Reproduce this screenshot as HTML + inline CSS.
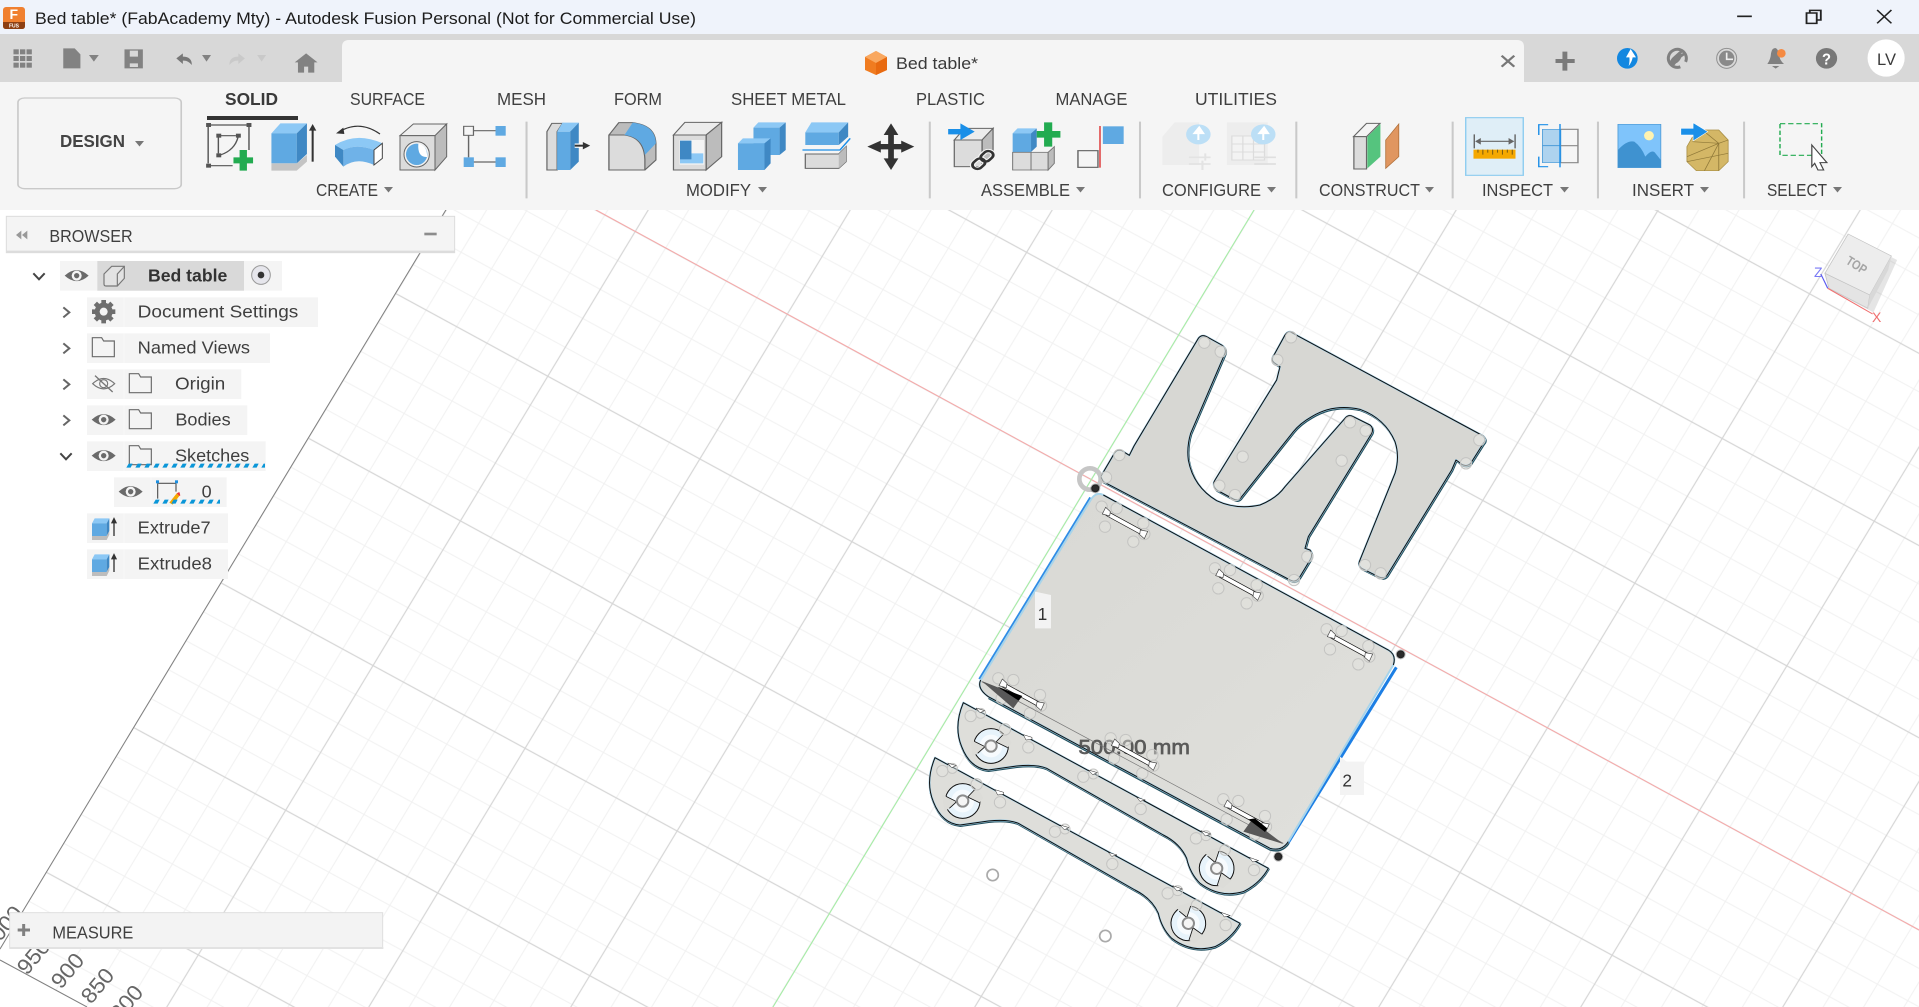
<!DOCTYPE html>
<html><head><meta charset="utf-8"><title>Bed table</title>
<style>
html,body{margin:0;padding:0;width:1919px;height:1007px;overflow:hidden;background:#fff}
svg{display:block}
text{font-family:"Liberation Sans",sans-serif;fill:#3f3f3f}
.br{font-size:52px}
</style></head><body>
<svg width="1919" height="1007" viewBox="0 0 1919 1007" xmlns="http://www.w3.org/2000/svg">
<defs>
<pattern id="grid" patternUnits="userSpaceOnUse" width="100" height="100" patternTransform="matrix(1.5204,.8271,-.8738,1.4467,1091.3,479.7)">
<path d="M20 0V100M40 0V100M60 0V100M80 0V100M0 20H100M0 40H100M0 60H100M0 80H100" stroke="#f1f1f1" stroke-width=".6" fill="none"/>
<path d="M0 0V100M100 0V100M0 0H100M0 100H100" stroke="#d6d6d6" stroke-width=".7" fill="none"/>
</pattern>
<pattern id="sq" patternUnits="userSpaceOnUse" width="27" height="18">
<path d="M1,17 L8,5 H20 L14,17Z" fill="#0a96d8"/>
</pattern>
<linearGradient id="pl" x1="0" y1="0" x2="1" y2="1"><stop offset="0" stop-color="#d8d8d4"/><stop offset="1" stop-color="#e0e0dc"/></linearGradient>
<g id="slot">
<g fill="rgba(228,228,224,.45)" stroke="#c4c4c2" stroke-width="3">
<circle cx="-70" cy="-50" r="17"/><circle cx="-25" cy="-45" r="17"/><circle cx="-60" cy="10" r="17"/><circle cx="55" cy="0" r="17"/><circle cx="25" cy="55" r="17"/><circle cx="58" cy="32" r="17"/></g>
<line x1="-55" y1="-30" x2="55" y2="30" stroke="#111" stroke-width="15"/>
<line x1="-55" y1="-30" x2="55" y2="30" stroke="#fff" stroke-width="11"/>
<path d="M-68,-28 L-58,-48 L-44,-35 L-46,-22Z M68,24 L58,46 L44,34 L46,20Z" fill="#fff" stroke="#444" stroke-width="2"/>
</g>
<g id="cut">
<circle r="52" fill="#e7f3fb" stroke="#111" stroke-width="3"/>
<circle r="34" fill="#f7fbfe"/>
<path d="M-62,-20 L-50,-14 L-18,2 L-40,22 L-55,30Z M42,-40 L15,-12 L50,5 L62,-10Z" fill="#dcdcd8"/>
<path d="M-50,-14 L-18,2 L-40,22 M38,-36 L15,-12 L50,5" fill="none" stroke="#111" stroke-width="2.5"/>
<circle r="17" fill="#f5f5f5" stroke="#8c8c8c" stroke-width="6"/>
</g>
<path id="rp" d="M190,188 L1105,685 Q1080,730 1030,755 Q960,775 900,730 Q870,700 860,655 Q840,610 790,585 L440,385 Q410,372 350,378 Q300,385 265,390 Q210,385 185,320 Q160,260 190,188Z"/>
<g id="rail">
<use href="#rp" transform="translate(1,3)" fill="none" stroke="#23505f" stroke-width="6" stroke-linejoin="round"/>
<use href="#rp" fill="#dededa" stroke="#a8d4ea" stroke-width="6" stroke-linejoin="round"/>
<use href="#rp" fill="none" stroke="#0e0e0e" stroke-width="3" stroke-linejoin="round"/>
<use href="#cut" transform="translate(273,318)"/>
<use href="#cut" transform="translate(950,685) rotate(82)"/>
<g fill="rgba(228,228,224,.45)" stroke="#c4c4c2" stroke-width="3">
<circle cx="212" cy="228" r="17"/><circle cx="242" cy="220" r="15"/><circle cx="315" cy="268" r="17"/><circle cx="385" cy="322" r="17"/><circle cx="550" cy="410" r="17"/><circle cx="580" cy="402" r="15"/><circle cx="722" cy="507" r="17"/><circle cx="888" cy="595" r="17"/><circle cx="918" cy="587" r="15"/><circle cx="1062" cy="690" r="17"/><circle cx="975" cy="630" r="16"/></g>
<g fill="#fff" stroke="#222" stroke-width="1.5">
<path d="M228,204 L240,218 L254,212Z"/><path d="M370,284 L378,300 L396,298 L396,292Z"/><path d="M565,390 L578,404 L592,398Z"/><path d="M710,472 L720,484 L736,480Z"/><path d="M903,572 L916,588 L932,582Z"/><path d="M1048,652 L1058,666 L1076,662Z"/></g>
</g>
<g id="eye"><path d="M-36,0 Q0,-33 36,0 Q0,33 -36,0Z" fill="#6a6a6a"/><circle r="15" fill="#f4f4f4"/><circle r="8" fill="#6a6a6a"/></g>
<path id="fold" d="M0,57 V0 H28 L34,10 H66 V57Z" fill="#f4f4f4" stroke="#6a6a6a" stroke-width="3.5"/>
<g id="ex">
<path d="M0,22 L8,7 H52 L44,22Z" fill="#8cc8f5"/><path d="M0,22 H44 V60 H0Z" fill="#5fa9e2"/><path d="M44,22 L52,7 V45 L44,60Z" fill="#3f88c4"/>
<path d="M0,60 H44 L52,45 V56 L44,72 H0Z" fill="#bdbdbd"/><path d="M66,60 V12 M60,20 L66,8 L72,20Z" stroke="#333" stroke-width="4" fill="#333"/>
</g>
<path id="car" d="M0,0 H9 L4.5,5.5Z" fill="#777"/>
<path id="sa" d="M122,500 L163,430 Q175,412 195,428 L208,436 L222,408 L415,85 Q425,72 440,80 L485,105 Q500,115 495,130 L392,370 Q380,410 385,450 Q400,530 470,572 Q530,600 600,585 Q650,565 675,530 L855,325 Q865,312 880,320 L930,345 Q942,355 935,370 L745,680 L735,715 L750,720 Q760,735 750,750 L720,800 Q708,820 690,810 L130,515Z"/>
<path id="sb" d="M690,65 L1270,378 Q1280,390 1270,400 L1232,460 Q1215,475 1195,455 L1188,450 L1175,480 L985,790 Q975,810 955,800 L905,775 Q892,765 900,750 L1005,490 Q1020,440 1005,395 Q975,325 900,298 Q820,280 755,320 Q720,340 700,365 L545,560 Q535,575 520,567 L470,540 Q455,525 465,510 L650,210 L660,170 L645,160 Q630,150 642,135 L675,75 Q685,60 700,68Z"/>
</defs>

<!-- canvas -->
<rect width="1919" height="1007" fill="#fff"/>
<polygon points="0,949 476,160 1919,160 1919,1007 87,1007 0,960" fill="url(#grid)"/>
<path d="M0,949 L476,160 M0,960 L87,1007" stroke="#808080" stroke-width="1" fill="none"/>
<line x1="596" y1="210" x2="1919" y2="930" stroke="#f8a8a8" stroke-width="1"/>
<line x1="1254" y1="210" x2="773" y2="1007" stroke="#a4f0a4" stroke-width="1"/>
<!-- scale labels -->
<g>
<text transform="translate(-8,952) rotate(-50)" font-size="22" style="fill:#666" textLength="50" lengthAdjust="spacingAndGlyphs">1000</text>
<text transform="translate(27,976) rotate(-50)" font-size="22" style="fill:#666" textLength="38" lengthAdjust="spacingAndGlyphs">950</text>
<text transform="translate(61,990) rotate(-50)" font-size="22" style="fill:#666" textLength="38" lengthAdjust="spacingAndGlyphs">900</text>
<text transform="translate(91,1005) rotate(-50)" font-size="22" style="fill:#666" textLength="38" lengthAdjust="spacingAndGlyphs">850</text>
<text transform="translate(120,1022) rotate(-50)" font-size="22" style="fill:#666" textLength="38" lengthAdjust="spacingAndGlyphs">800</text>
</g>

<!-- upper part -->
<g transform="translate(1060,310) scale(.33333)">
<circle cx="90" cy="507" r="32" fill="none" stroke="#c6c6c6" stroke-width="14"/>
<g fill="none" stroke="#23505f" stroke-width="6" stroke-linejoin="round" transform="translate(2,3)"><use href="#sa"/><use href="#sb"/></g>
<g fill="#d7d7d3" stroke="#a8d4ea" stroke-width="6" stroke-linejoin="round"><use href="#sa"/><use href="#sb"/></g>
<g fill="none" stroke="#0e0e0e" stroke-width="3" stroke-linejoin="round"><use href="#sa"/><use href="#sb"/></g>
<g fill="rgba(232,232,228,.6)" stroke="#c4c4c2" stroke-width="3">
<circle cx="433" cy="98" r="17"/><circle cx="482" cy="125" r="17"/><circle cx="178" cy="435" r="17"/><circle cx="138" cy="502" r="17"/><circle cx="693" cy="82" r="17"/><circle cx="652" cy="150" r="17"/><circle cx="1258" cy="390" r="17"/><circle cx="1218" cy="460" r="17"/><circle cx="548" cy="440" r="17"/><circle cx="478" cy="527" r="17"/><circle cx="525" cy="555" r="17"/><circle cx="870" cy="337" r="17"/><circle cx="917" cy="362" r="17"/><circle cx="845" cy="452" r="17"/><circle cx="742" cy="740" r="17"/><circle cx="702" cy="810" r="17"/><circle cx="915" cy="765" r="17"/><circle cx="962" cy="790" r="17"/></g>
</g>

<!-- rails -->
<g transform="translate(900,640) scale(.33333)">
<use href="#rail"/>
<use href="#rail" transform="translate(-85,165)"/>
<circle cx="278" cy="705" r="17" fill="#fff" stroke="#aaa" stroke-width="5"/>
<circle cx="616" cy="888" r="17" fill="#fff" stroke="#aaa" stroke-width="5"/>
</g>

<!-- plate -->
<g transform="translate(960,480) scale(.33333)">
<path d="M395,55 L62,600" stroke="#2f8ce6" stroke-width="9" transform="translate(-3,-2)"/>
<path d="M1305,560 L975,1095" stroke="#1d7fe4" stroke-width="9" transform="translate(4,2)"/>
<path d="M985,1085 Q965,1115 930,1105 L85,650" fill="none" stroke="#23505f" stroke-width="7" transform="translate(1,4)"/>
<path d="M395,55 Q410,35 430,45 L1285,510 Q1310,525 1300,555 L985,1085 Q965,1115 930,1105 L85,650 Q50,625 62,600Z" fill="url(#pl)" stroke="#a8d4ea" stroke-width="6"/>
<path d="M430,45 L1285,510 Q1310,525 1300,555 M985,1085 Q965,1115 930,1105 L85,650 Q50,625 62,600" fill="none" stroke="#0e0e0e" stroke-width="3"/>
<text x="355" y="822" font-size="62" textLength="335" lengthAdjust="spacingAndGlyphs" style="fill:#4c4c4c;stroke:#4c4c4c;stroke-width:2;opacity:.9">500.00 mm</text>
<use href="#slot" transform="translate(495,130)"/><use href="#slot" transform="translate(835,315)"/><use href="#slot" transform="translate(1170,498)"/>
<use href="#slot" transform="translate(185,645)"/><use href="#slot" transform="translate(522,825)"/><use href="#slot" transform="translate(860,1008)"/>
<line x1="65" y1="605" x2="970" y2="1090" stroke="#777" stroke-width="2"/>
<polygon points="65,603 185,650 160,685" fill="#585858"/><polygon points="112,620 187,648 176,662" fill="#000"/>
<polygon points="970,1092 850,1055 875,1020" fill="#585858"/><polygon points="915,1056 865,1018 885,1015 922,1045" fill="#000"/>
<path d="M225,335 L273,345 V445 H225Z" fill="#f3f3f3"/><text x="233" y="420" font-size="52" style="fill:#333">1</text>
<path d="M1140,830 L1160,845 H1212 V945 H1140Z" fill="#f3f3f3"/><text x="1147" y="920" font-size="52" style="fill:#333">2</text>
<g fill="#2b2b2b" stroke="rgba(0,0,0,.25)" stroke-width="6"><circle cx="1322" cy="523" r="12"/><circle cx="955" cy="1130" r="12"/><circle cx="406" cy="25" r="12"/></g>
</g>

<!-- title bar -->
<rect width="1919" height="34" fill="#eff3fb"/>
<rect y="34" width="1919" height="48" fill="#d8d8d8"/>
<path d="M342,82 V47 Q342,40 349,40 H1517 Q1524,40 1524,47 V82Z" fill="#f5f5f5"/>
<rect y="82" width="1919" height="128" fill="#f5f5f5"/>
<text x="35" y="24" font-size="17" textLength="661" lengthAdjust="spacingAndGlyphs" style="fill:#1c1c1c">Bed table* (FabAcademy Mty) - Autodesk Fusion Personal (Not for Commercial Use)</text>
<g>
<rect x="3" y="7" width="22" height="22" rx="3" fill="#f08030"/>
<path d="M3,22 H25 V26 Q25,29 22,29 H6 Q3,29 3,26Z" fill="#8d3f13"/>
<text x="9.5" y="19" font-size="14" style="fill:#fff;font-weight:bold">F</text>
<text x="9" y="27.5" font-size="5" style="fill:#fff;font-weight:bold">FUS</text>
</g>
<text x="896" y="69" font-size="17" textLength="82" lengthAdjust="spacingAndGlyphs" style="fill:#3a3a3a">Bed table*</text>
<path d="M876,51 L887,57 V70 L876,75 L865,70 V57Z" fill="#f07c20"/><path d="M876,51 L887,57 L876,63 L865,57Z" fill="#f9a860"/><path d="M876,63 L887,57 V70 L876,75Z" fill="#e86a10"/>

<!-- window + tab bar icons (zoom-1 scale) -->
<g transform="scale(.40816,.33333)">
<g fill="#828282">
<rect x="33" y="148" width="13" height="15"/><rect x="49" y="148" width="13" height="15"/><rect x="65" y="148" width="13" height="15"/>
<rect x="33" y="168" width="13" height="15"/><rect x="49" y="168" width="13" height="15"/><rect x="65" y="168" width="13" height="15"/>
<rect x="33" y="188" width="13" height="15"/><rect x="49" y="188" width="13" height="15"/><rect x="65" y="188" width="13" height="15"/>
<path d="M155,145 H183 L197,163 V205 H155Z"/>
<path d="M218,165 H242 L230,185Z"/>
<path d="M305,148 H350 V205 H305Z M318,152 V170 H338 V152Z M318,190 V201 H338 V190Z" fill-rule="evenodd"/>
<path d="M495,165 H517 L506,185Z"/>
<path d="M722,187 L750,160 L778,187 H770 V218 H755 V200 H745 V218 H730 V187Z"/>
</g>
<path d="M432,175 L448,160 V170 Q470,170 470,195 Q460,180 448,182 V192Z" fill="#777"/>
<g fill="#c9c9c9"><path d="M600,175 L584,160 V170 Q562,170 562,195 Q572,180 584,182 V192Z"/><path d="M630,165 H652 L641,185Z"/></g>

<!-- DESIGN -->
<rect x="44" y="294" width="400" height="272" rx="16" ry="13" fill="#f5f5f5" stroke="#c9c9c9" stroke-width="4"/>

<!-- sketch -->
<g fill="none" stroke="#555" stroke-width="3.5">
<path d="M515,375 H605 M510,380 V490 M515,497 H570 M610,380 V450 M540,407 H578 M535,412 V460 M583,412 Q575,450 540,465"/></g>
<g fill="#555"><rect x="505" y="369" width="12" height="12"/><rect x="604" y="369" width="12" height="12"/><rect x="505" y="491" width="12" height="12"/><rect x="530" y="401" width="12" height="12"/><rect x="578" y="401" width="12" height="12"/><rect x="530" y="460" width="12" height="12"/></g>
<path d="M572,472 H587 V450 H605 V472 H620 V490 H605 V512 H587 V490 H572Z" fill="#22ab50"/>

<!-- extrude -->
<path d="M665,400 L687,370 H752 L727,400Z" fill="#8cc8f5"/><rect x="665" y="400" width="62" height="90" fill="#5fa9e2"/><path d="M727,400 L752,370 V462 L727,490Z" fill="#3f88c4"/>
<path d="M665,490 H727 L752,465 V485 L727,512 H665Z" fill="#c4c4c4"/>
<path d="M766,485 V390" stroke="#333" stroke-width="5"/><path d="M757,392 L766,372 L775,392Z" fill="#333"/>

<!-- pattern -->
<path d="M1160,392 H1214 M1148,405 V472 M1160,486 H1214" stroke="#666" stroke-width="3.5"/>
<rect x="1136" y="379" width="24" height="27" fill="#f5f5f5" stroke="#666" stroke-width="3"/>
<rect x="1214" y="378" width="25" height="29" fill="#5fa9e2"/><rect x="1136" y="472" width="25" height="29" fill="#5fa9e2"/><rect x="1214" y="472" width="25" height="29" fill="#5fa9e2"/>
<path d="M1290,365 V595" stroke="#c9c9c9" stroke-width="5"/>

<!-- press pull -->
<path d="M1340,510 V395 L1352,370 H1378 L1365,395 V510Z" fill="#dcdcdc" stroke="#666" stroke-width="3"/>
<rect x="1365" y="395" width="32" height="115" fill="#5fa9e2"/><path d="M1365,395 L1378,368 H1418 L1397,395Z" fill="#8cc8f5"/><path d="M1397,395 L1418,368 V485 L1397,510Z" fill="#3f88c4"/>
<path d="M1408,437 H1430" stroke="#fff" stroke-width="13"/><path d="M1408,437 H1432" stroke="#333" stroke-width="6"/><path d="M1428,426 L1446,437 L1428,448Z" fill="#333"/>

<!-- fillet -->
<path d="M1492,405 L1516,368 H1550 Q1605,375 1607,430 V480 L1580,510 H1492Z" fill="#bcbcbc" stroke="#666" stroke-width="3"/>
<path d="M1492,405 H1530 Q1578,412 1580,478 V510 H1492Z" fill="#dcdcdc" stroke="#666" stroke-width="3"/>
<path d="M1530,405 L1550,368 Q1605,375 1607,430 L1580,465 Q1575,412 1530,405Z" fill="#5fa9e2"/>
</g>

<!-- revolve + hole (crop coords) -->
<g transform="translate(200,115) scale(.33333)">
<path d="M405,90 Q470,50 547,85 L522,105 Q470,85 430,105Z" fill="#8cc8f5"/>
<path d="M430,105 Q470,85 522,105 V150 Q470,125 430,155Z" fill="#6fb2e8"/>
<path d="M405,90 L430,105 V155 L405,125Z" fill="#3f88c4"/>
<path d="M522,105 L547,85 V130 L522,150Z" fill="#fff" stroke="#444" stroke-width="3"/>
<path d="M540,57 Q480,15 422,48" fill="none" stroke="#333" stroke-width="3.5"/><path d="M408,55 L430,38 L433,57Z" fill="#333"/>
<path d="M600,62 L640,27 H740 L705,62Z" fill="#efefef" stroke="#666" stroke-width="3"/>
<path d="M705,62 L740,27 V125 L705,165Z" fill="#bcbcbc" stroke="#666" stroke-width="3"/>
<rect x="600" y="62" width="105" height="103" fill="#dcdcdc" stroke="#666" stroke-width="3"/>
<circle cx="650" cy="118" r="38" fill="#f2f2f2" stroke="#666" stroke-width="3"/>
<circle cx="650" cy="118" r="32" fill="#5fa9e2"/><path d="M655,86 Q683,92 681,126 Q652,128 655,86Z" fill="#fff"/>
</g>

<!-- zoom-2 icons -->
<g transform="translate(640,0) scale(.40816,.33333)">
<path d="M82,405 L110,367 H200 L162,405Z" fill="#ececec" stroke="#666" stroke-width="3"/><path d="M162,405 L200,367 V470 L162,510Z" fill="#bcbcbc" stroke="#666" stroke-width="3"/>
<rect x="82" y="405" width="80" height="105" fill="#dcdcdc" stroke="#666" stroke-width="3"/>
<rect x="97" y="420" width="60" height="74" fill="#f4f4f4"/><path d="M98,422 H126 V460 H155 V490 H98Z" fill="#8cc8f5"/><path d="M98,422 H126 V478 H98Z" fill="#3f88c4"/>

<path d="M278,383 L290,367 H357 L342,383Z" fill="#8cc8f5"/><path d="M278,383 H342 V465 H278Z" fill="#5fa9e2"/><path d="M342,383 L357,367 V450 L342,465Z" fill="#3f88c4"/>
<path d="M240,430 L252,415 H320 L305,430Z" fill="#8cc8f5"/><rect x="240" y="430" width="65" height="80" fill="#5fa9e2"/><path d="M305,430 L320,415 V490 L305,510Z" fill="#3f88c4"/>

<path d="M405,397 L420,367 H510 L487,397Z" fill="#8cc8f5"/><path d="M405,397 H487 V435 H405Z" fill="#5fa9e2"/><path d="M487,397 L510,367 V410 L487,435Z" fill="#3f88c4"/>
<path d="M398,450 H490 L515,415" fill="none" stroke="#1d8fe8" stroke-width="4"/>
<path d="M405,462 H487 L505,440 V485 L487,505 H405Z" fill="#dcdcdc" stroke="#666" stroke-width="3"/><path d="M487,462 L505,440 V485 L487,505Z" fill="#bcbcbc"/>

<path d="M615,370 L633,405 H622 V432 H640 V422 L672,440 L640,458 V448 H622 V475 H633 L615,510 L597,475 H608 V448 H590 V458 L557,440 L590,422 V432 H608 V405 H597Z" fill="#333"/>
<path d="M710,365 V595" stroke="#c9c9c9" stroke-width="5"/>

<path d="M770,420 L795,385 H865 L838,420Z" fill="#ececec" stroke="#666" stroke-width="3"/><path d="M838,420 L865,385 V470 L838,500Z" fill="#bcbcbc" stroke="#666" stroke-width="3"/>
<rect x="770" y="420" width="68" height="80" fill="#dcdcdc" stroke="#666" stroke-width="3"/>
<path d="M755,387 H785 V370 L820,395 L785,420 V403 H755Z" fill="#1a8fe8"/>
<g transform="translate(840,480) rotate(-48)" fill="none"><rect x="-32" y="-12" width="34" height="24" rx="12" stroke="#f5f5f5" stroke-width="13"/><rect x="-2" y="-12" width="34" height="24" rx="12" stroke="#f5f5f5" stroke-width="13"/><rect x="-32" y="-12" width="34" height="24" rx="12" stroke="#333" stroke-width="7"/><rect x="-2" y="-12" width="34" height="24" rx="12" stroke="#333" stroke-width="7"/></g>

<path d="M913,400 L925,385 H972 L958,400Z" fill="#8cc8f5"/><rect x="913" y="400" width="45" height="56" fill="#5fa9e2"/><path d="M958,400 L972,385 V440 L958,456Z" fill="#3f88c4"/>
<rect x="913" y="457" width="45" height="53" fill="#dcdcdc" stroke="#777" stroke-width="2.5"/><rect x="958" y="457" width="42" height="53" fill="#dcdcdc" stroke="#777" stroke-width="2.5"/><path d="M1000,457 L1015,440 V490 L1000,510Z" fill="#bcbcbc" stroke="#777" stroke-width="2.5"/>
<path d="M972,393 H990 V367 H1010 V393 H1030 V413 H1010 V440 H990 V413 H972Z" fill="#22ab50"/>

<rect x="1134" y="379" width="51" height="53" fill="#5fa9e2"/><path d="M1127,378 V503" stroke="#d33" stroke-width="3.5"/><rect x="1073" y="452" width="49" height="50" fill="#f5f5f5" stroke="#666" stroke-width="3.5"/>
<path d="M1225,365 V595" stroke="#c9c9c9" stroke-width="5"/>

<path d="M1280,410 L1310,367 H1370 V495 H1280Z" fill="#ededed"/><ellipse cx="1368" cy="403" rx="30" ry="30" fill="#bcdff6"/><path d="M1368,420 V395 M1358,400 L1370,382 L1380,400Z" stroke="#fff" stroke-width="5" fill="#fff"/>
<path d="M1345,472 H1398 M1345,492 H1398 M1385,460 V482 M1378,482 V510" stroke="#e3e3e3" stroke-width="5"/>
<rect x="1438" y="367" width="100" height="128" fill="#ededed"/><path d="M1450,408 H1530 V480 H1450Z M1477,408 V480 M1503,408 V480 M1450,432 H1530 M1450,456 H1530" stroke="#dcdcdc" stroke-width="3" fill="#f3f3f3"/>
<ellipse cx="1527" cy="403" rx="30" ry="30" fill="#bcdff6"/><path d="M1527,420 V395 M1517,400 L1529,382 L1539,400Z" stroke="#fff" stroke-width="5" fill="#fff"/>
<path d="M1505,472 H1558 M1505,492 H1558" stroke="#dfdfdf" stroke-width="5"/>
</g>

<!-- top-right round icons (crop coords) -->
<g transform="translate(1620,40) scale(.33333)">
<circle cx="22" cy="55" r="31" fill="#1387e0"/>
<path d="M32,27 L48,52 H38 Q36,65 26,78 Q30,62 28,52 H18Z" fill="#fff"/>
<circle cx="172" cy="55" r="27" fill="none" stroke="#808080" stroke-width="9" stroke-dasharray="128 22" transform="rotate(110 172 55)"/>
<path d="M150,68 Q150,60 158,52 L176,36 L184,30 L188,36 L182,42 L194,38 L196,44 L184,52 Q178,66 168,70 L160,80Z" fill="#808080"/>
<circle cx="320" cy="55" r="30" fill="none" stroke="#909090" stroke-width="3"/>
<circle cx="320" cy="55" r="23" fill="#8a8a8a"/><path d="M320,38 V58 H339" stroke="#eee" stroke-width="5" fill="none"/>
<path d="M442,72 Q452,58 453,40 Q456,24 466,24 Q474,26 476,40 Q478,60 492,72Z M456,78 H478 L467,86Z" fill="#808080"/>
<circle cx="484" cy="40" r="13" fill="#f58a42"/>
</g>

<!-- zoom-3 icons -->
<g transform="translate(1280,0) scale(.40816,.33333)">
<path d="M1120,49 H1156" stroke="#222" stroke-width="5"/>
<path d="M1290,39 H1315 V70 H1290Z M1298,39 V31 H1325 V60 H1315" fill="none" stroke="#222" stroke-width="4.5"/>
<path d="M1463,30 L1498,70 M1498,30 L1463,70" stroke="#222" stroke-width="4"/>
<path d="M543,167 L574,200 M574,167 L543,200" stroke="#777" stroke-width="6"/>
<path d="M675,183 H722 M698,155 V212" stroke="#7a7a7a" stroke-width="12"/>
<ellipse cx="1339" cy="175" rx="26" ry="31" fill="#787878"/>
<ellipse cx="1485" cy="174" rx="45.5" ry="56" fill="#fff"/>
<path d="M40,365 V595 M423,365 V595 M779,365 V595 M1137,365 V595" stroke="#c9c9c9" stroke-width="5"/>
<!-- construct -->
<path d="M180,410 L212,370 H245 L212,410Z" fill="#f4f4f4" stroke="#666" stroke-width="3"/><rect x="181" y="410" width="31" height="97" fill="#dcdcdc" stroke="#666" stroke-width="3"/>
<path d="M214,410 L246,372 V470 L214,505Z" fill="#55c47e"/><path d="M259,420 L291,372 V470 L259,505Z" fill="#e09660" stroke="#b0703a" stroke-width="2"/>
<!-- measure -->
<rect x="455" y="353" width="141" height="173" fill="#dfeef7" stroke="#8fcdf0" stroke-width="3.5"/>
<path d="M476,403 V445 M576,403 V445 M480,424 H572" stroke="#666" stroke-width="3.5"/><path d="M478,424 L492,414 V434Z M574,424 L560,414 V434Z" fill="#666"/>
<rect x="474" y="449" width="103" height="27" fill="#f5a800"/><path d="M485,449 V458 M497,449 V464 M509,449 V458 M521,449 V464 M533,449 V458 M545,449 V464 M557,449 V458 M569,449 V464" stroke="#7a5a10" stroke-width="2.5"/>
<!-- section -->
<rect x="643" y="388" width="45" height="100" fill="#aed3ef" stroke="#4b9bd8" stroke-width="2"/><path d="M643,437 H688" stroke="#4b9bd8" stroke-width="3"/>
<path d="M688,388 H730 V488 H688 M688,437 H730" fill="none" stroke="#888" stroke-width="3.5"/>
<path d="M686,372 V502" stroke="#1d8fe8" stroke-width="3.5"/><path d="M657,374 H634 V405 M634,470 V500 H657" fill="none" stroke="#1d8fe8" stroke-width="3.5"/>
<!-- insert image -->
<rect x="828" y="373" width="105" height="130" fill="#7fc4fb" stroke="#4e9ad5" stroke-width="2"/>
<path d="M828,502 V450 Q850,420 868,425 Q885,440 895,470 Q912,445 920,460 L933,480 V502Z" fill="#3f92d0"/><ellipse cx="904" cy="407" rx="12" ry="14" fill="#fff3b0"/>
<!-- mesh -->
<path d="M1010,412 L1035,390 H1075 L1098,420 V485 L1075,512 H1020 L997,485 V440Z" fill="#d4b766" stroke="#a98f45" stroke-width="2"/>
<path d="M1035,390 L1075,430 L1098,420 M1010,425 L1075,430 L1040,512 M997,470 L1075,430 M997,485 L1098,460 M1075,430 L1075,512" fill="none" stroke="#8f7838" stroke-width="2"/>
<path d="M982,385 H1012 V368 L1048,395 L1012,423 V405 H982Z" fill="#1a8fe8" stroke="#fff" stroke-width="1.5"/>
<!-- select -->
<rect x="1225" y="371" width="102" height="95" fill="none" stroke="#22ab50" stroke-width="3.5" stroke-dasharray="13 7"/>
<path d="M1303,435 L1340,488 L1323,488 L1332,510 L1318,510 L1310,490 L1303,500Z" fill="#fff" stroke="#444" stroke-width="3"/>
<!-- view cube -->
<path d="M1392,702 L1498,768 L1440,925 L1345,865 L1335,820Z" fill="#000" opacity=".1" transform="translate(14,12)"/>
<path d="M1392,702 L1498,768 L1445,885 L1335,820Z" fill="#ededed" stroke="#c4c4c4" stroke-width="2"/>
<path d="M1335,820 L1445,885 L1440,925 L1345,865Z" fill="#e4e4e4" stroke="#c4c4c4" stroke-width="2"/>
<path d="M1445,885 L1498,768 L1490,810 L1440,925Z" fill="#d8d8d8"/>
<path d="M1325,822 L1342,865" stroke="#5a5af0" stroke-width="3"/><path d="M1342,865 L1452,942" stroke="#f07070" stroke-width="3"/>
</g>
<text transform="translate(1845,263) rotate(32)" font-size="13" style="fill:#a5a5a5;font-weight:bold" textLength="22" lengthAdjust="spacingAndGlyphs">TOP</text>
<text x="1814" y="277" font-size="14" style="fill:#7a7af5">Z</text>
<text x="1872" y="322" font-size="14" style="fill:#f07070">X</text>
<text x="1877" y="65" font-size="17" textLength="19" lengthAdjust="spacingAndGlyphs" style="fill:#3a3a3a">LV</text>
<text x="1822" y="64.500" font-size="16" style="fill:#fff;font-weight:bold" textLength="9" lengthAdjust="spacingAndGlyphs">?</text>

<!-- toolbar text -->
<g font-size="17.5">
<text x="60" y="147" textLength="65" lengthAdjust="spacingAndGlyphs" style="font-weight:bold;fill:#444">DESIGN</text>
<text x="225" y="105" textLength="53" lengthAdjust="spacingAndGlyphs" style="font-weight:bold;fill:#3a3a3a">SOLID</text>
<text x="350" y="105" textLength="75" lengthAdjust="spacingAndGlyphs">SURFACE</text>
<text x="497" y="105" textLength="49" lengthAdjust="spacingAndGlyphs">MESH</text>
<text x="614" y="105" textLength="48" lengthAdjust="spacingAndGlyphs">FORM</text>
<text x="731" y="105" textLength="115" lengthAdjust="spacingAndGlyphs">SHEET METAL</text>
<text x="916" y="105" textLength="69" lengthAdjust="spacingAndGlyphs">PLASTIC</text>
<text x="1055.500" y="105" textLength="72" lengthAdjust="spacingAndGlyphs">MANAGE</text>
<text x="1195" y="105" textLength="82" lengthAdjust="spacingAndGlyphs">UTILITIES</text>
<text x="316" y="196" textLength="62" lengthAdjust="spacingAndGlyphs">CREATE</text>
<text x="686" y="196" textLength="65" lengthAdjust="spacingAndGlyphs">MODIFY</text>
<text x="981" y="196" textLength="89" lengthAdjust="spacingAndGlyphs">ASSEMBLE</text>
<text x="1162" y="196" textLength="99" lengthAdjust="spacingAndGlyphs">CONFIGURE</text>
<text x="1319" y="196" textLength="101" lengthAdjust="spacingAndGlyphs">CONSTRUCT</text>
<text x="1482" y="196" textLength="71" lengthAdjust="spacingAndGlyphs">INSPECT</text>
<text x="1632" y="196" textLength="62" lengthAdjust="spacingAndGlyphs">INSERT</text>
<text x="1767" y="196" textLength="60" lengthAdjust="spacingAndGlyphs">SELECT</text>
</g>
<rect x="207" y="116" width="91" height="4" fill="#333"/>
<use href="#car" x="135" y="141"/><use href="#car" x="384" y="187"/><use href="#car" x="758" y="187"/><use href="#car" x="1076" y="187"/><use href="#car" x="1267" y="187"/><use href="#car" x="1425" y="187"/><use href="#car" x="1560" y="187"/><use href="#car" x="1700" y="187"/><use href="#car" x="1833" y="187"/>

<!-- browser -->
<g transform="translate(0,210) scale(.33333)">
<rect x="19" y="19" width="1345" height="109" fill="#f4f4f4" stroke="#dcdcdc" stroke-width="3"/>
<path d="M20,125 H1364" stroke="#dcdcdc" stroke-width="6"/>
<path d="M48,75 L64,62 V88Z M66,75 L82,62 V88Z" fill="#999"/>
<rect x="1273" y="68" width="37" height="8" fill="#8c8c8c"/>
<text x="148" y="96" class="br" textLength="250" lengthAdjust="spacingAndGlyphs">BROWSER</text>
<g fill="#f4f4f4">
<rect x="180" y="153" width="666" height="89"/><rect x="261" y="262" width="693" height="89"/><rect x="261" y="370" width="549" height="89"/><rect x="261" y="478" width="463" height="89"/><rect x="261" y="586" width="481" height="89"/><rect x="261" y="694" width="536" height="89"/><rect x="342" y="802" width="338" height="89"/><rect x="261" y="910" width="423" height="89"/><rect x="261" y="1018" width="423" height="89"/></g>
<rect x="292" y="153" width="440" height="89" fill="#d9d9d9"/>
<path d="M372,262 V351 M372,370 V459 M372,478 V567 M372,586 V675 M372,694 V783 M453,802 V891 M372,910 V999 M372,1018 V1107" stroke="#fff" stroke-width="2" opacity=".7"/>
<g fill="none" stroke="#444" stroke-width="6"><path d="M100,190 L117,208 L134,190"/><path d="M181,730 L198,748 L215,730"/></g>
<g fill="none" stroke="#666" stroke-width="6"><path d="M190,292 L208,307 L190,322"/><path d="M190,400 L208,415 L190,430"/><path d="M190,508 L208,523 L190,538"/><path d="M190,616 L208,631 L190,646"/></g>
<use href="#eye" x="230" y="197"/><use href="#eye" x="311" y="629"/><use href="#eye" x="311" y="737"/><use href="#eye" x="392" y="845"/>
<g fill="none" stroke="#777" stroke-width="3.5"><path d="M278,521 Q311,490 344,521 Q311,552 278,521Z"/><circle cx="311" cy="521" r="12"/></g><path d="M285,497 L338,546" stroke="#777" stroke-width="4"/>
<path d="M312,192 L335,169 H373 V205 L352,228 H318 Q312,228 312,222Z" fill="#e2e2e2" stroke="#777" stroke-width="3.5"/><path d="M352,228 V192 L373,169" fill="none" stroke="#777" stroke-width="3.5"/>
<circle cx="783" cy="195" r="28" fill="#e6e6ec" stroke="#999" stroke-width="3"/><circle cx="783" cy="195" r="10" fill="#333"/>
<g fill="#6e6e6e"><circle cx="311" cy="305" r="27"/><g stroke="#6e6e6e" stroke-width="14"><path d="M311,270 V340 M276,305 H346 M286,280 L336,330 M336,280 L286,330"/></g></g><circle cx="311" cy="305" r="12" fill="#f4f4f4"/>
<use href="#fold" x="277" y="383"/><use href="#fold" x="388" y="491"/><use href="#fold" x="388" y="599"/><use href="#fold" x="388" y="707"/>
<path d="M473,820 H528 M473,820 V866 M528,820 V845" stroke="#555" stroke-width="3.5" fill="none"/><g fill="#1c8fe0"><rect x="468" y="811" width="9" height="9"/><rect x="525" y="811" width="9" height="9"/></g>
<path d="M508,878 L530,850 L538,858 L518,884Z" fill="#f5a800"/><path d="M530,850 L538,846 L541,856 L538,858Z" fill="#e33"/>
<use href="#ex" x="276" y="918"/><use href="#ex" x="276" y="1026"/>
<rect x="375" y="758" width="420" height="18" fill="url(#sq)"/><rect x="455" y="867" width="205" height="18" fill="url(#sq)"/>
<text x="444" y="215" class="br" textLength="238" lengthAdjust="spacingAndGlyphs" style="font-weight:bold;fill:#333">Bed table</text>
<text x="413" y="323" class="br" textLength="482" lengthAdjust="spacingAndGlyphs">Document Settings</text>
<text x="413" y="431" class="br" textLength="337" lengthAdjust="spacingAndGlyphs">Named Views</text>
<text x="525" y="539" class="br" textLength="151" lengthAdjust="spacingAndGlyphs">Origin</text>
<text x="526" y="647" class="br" textLength="166" lengthAdjust="spacingAndGlyphs">Bodies</text>
<text x="525" y="755" class="br" textLength="223" lengthAdjust="spacingAndGlyphs">Sketches</text>
<text x="605" y="862" class="br" textLength="30" lengthAdjust="spacingAndGlyphs">0</text>
<text x="413" y="971" class="br" textLength="219" lengthAdjust="spacingAndGlyphs">Extrude7</text>
<text x="413" y="1079" class="br" textLength="223" lengthAdjust="spacingAndGlyphs">Extrude8</text>
</g>

<!-- measure -->
<g transform="translate(0,880) scale(.33333)">
<rect x="29" y="98" width="1119" height="107" fill="#f3f3f3" stroke="#dedede" stroke-width="3"/>
<path d="M30,204 H1150" stroke="#e2e2e2" stroke-width="6"/>
<path d="M53,150 H90 M71,132 V168" stroke="#808080" stroke-width="9"/>
<text x="157" y="175" class="br" textLength="243" lengthAdjust="spacingAndGlyphs">MEASURE</text>
</g>
</svg>
</body></html>
